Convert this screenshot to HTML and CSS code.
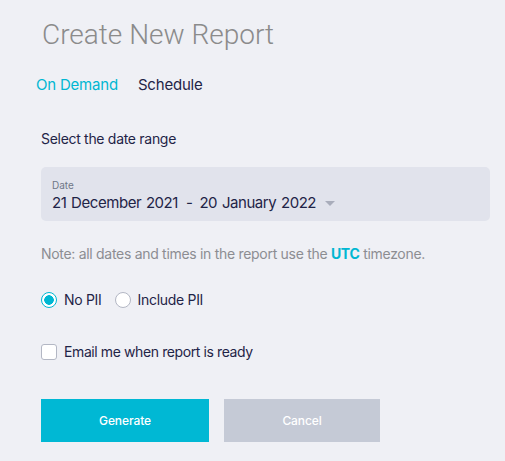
FILE: index.html
```html
<!DOCTYPE html>
<html>
<head>
<meta charset="utf-8">
<link rel="stylesheet" href="styles.css">
</head>
<body>
<div class="page">
  <h1 class="title">Create New Report</h1>
  <div class="tabs">
    <span class="tab active">On Demand</span>
    <span class="tab">Schedule</span>
  </div>
  <div class="form">
    <p class="label">Select the date range</p>
    <div class="datebox">
      <div class="date-label">Date</div>
      <div class="date-value">
        <span class="range"><span>21 December 2021</span><span class="sep">-</span><span>20 January 2022</span></span>
        <span class="caret"></span>
      </div>
    </div>
    <p class="note">Note: all dates and times in the report use the <b>UTC</b> timezone.</p>
    <div class="radios">
      <label class="radio-item"><span class="radio checked"></span>No PII</label>
      <label class="radio-item"><span class="radio"></span>Include PII</label>
    </div>
    <label class="check-item"><span class="checkbox"></span>Email me when report is ready</label>
    <div class="buttons">
      <button class="btn primary">Generate</button>
      <button class="btn disabled">Cancel</button>
    </div>
  </div>
</div>
</body>
</html>
```
FILE: styles.css
```css
* { box-sizing: border-box; }
html, body { margin: 0; padding: 0; background: #eff0f5; }
body { font-family: Inter, "Noto Sans", sans-serif; color: #1f2447; }
.page { padding: 18px 15px 0 36px; }
.title {
  margin: 0 0 0 6px;
  font-family: Roboto, sans-serif;
  font-weight: 300;
  font-size: 28px;
  line-height: 34px;
  color: #8b8b8b;
}
.tabs { display: flex; gap: 20px; margin-top: 24px; font-size: 15px; line-height: 18px; letter-spacing: -0.2px; }
.tab { color: #1f2447; }
.tab.active { color: #00b7d2; }
.form { padding-left: 5px; letter-spacing: -0.3px; }
.label { margin: 36px 0 0; font-size: 14px; line-height: 17px; }
.datebox {
  margin-top: 20px;
  width: 449px;
  height: 54px;
  background: #e1e3ec;
  border-radius: 5px;
  padding: 12px 11px 0;
}
.date-label { font-size: 10px; line-height: 12px; color: #6f7787; letter-spacing: 0; }
.date-value { display: flex; align-items: center; gap: 9px; font-size: 15px; line-height: 20px; margin-top: 2px; letter-spacing: -0.45px; word-spacing: 1px; }
.range { display: flex; }
.sep { margin: 0 7px 0 8px; }
.caret {
  width: 0; height: 0;
  border-left: 5px solid transparent;
  border-right: 5px solid transparent;
  border-top: 5px solid #a9adbb;
}
.note { margin: 24px 0 0; font-size: 14px; line-height: 17px; color: #8c8d92; }
.note b { color: #00b7d2; font-weight: 700; }
.radios { display: flex; gap: 13px; margin-top: 29px; font-size: 14px; line-height: 17px; }
.radio-item, .check-item { display: flex; align-items: center; gap: 7px; }
.radio {
  width: 16px; height: 16px; border-radius: 50%;
  border: 1px solid #b3b7c4; background: #fff;
  display: inline-block;
}
.radio.checked {
  border: 1.5px solid #00b7d2;
  background: radial-gradient(circle, #00b7d2 0 4.5px, #fff 5px);
}
.check-item { margin-top: 35px; font-size: 14px; line-height: 17px; letter-spacing: -0.4px; }
.checkbox {
  width: 16px; height: 16px; border: 1px solid #b3b7c4; border-radius: 3px; background: #fff;
  display: inline-block;
}
.buttons { display: flex; gap: 15px; margin-top: 39px; }
.btn {
  border: 0; height: 43px; font-family: Inter, sans-serif; font-size: 12px; color: #fff;
  font-weight: 500; letter-spacing: -0.1px;
}
.btn.primary { width: 168px; background: #00b8d4; }
.btn.disabled { width: 156px; background: #c5cad6; }
```
